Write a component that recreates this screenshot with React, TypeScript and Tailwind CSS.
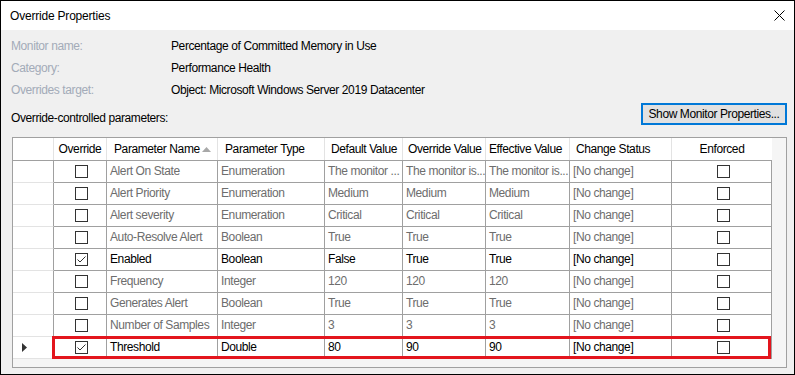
import React from "react";

type Row = {
  name: string;
  type: string;
  def: string;
  over: string;
  eff: string;
  checked: boolean;
  active: boolean;
  current?: boolean;
};

const rows: Row[] = [
  { name: "Alert On State", type: "Enumeration", def: "The monitor ...", over: "The monitor is...", eff: "The monitor is...", checked: false, active: false },
  { name: "Alert Priority", type: "Enumeration", def: "Medium", over: "Medium", eff: "Medium", checked: false, active: false },
  { name: "Alert severity", type: "Enumeration", def: "Critical", over: "Critical", eff: "Critical", checked: false, active: false },
  { name: "Auto-Resolve Alert", type: "Boolean", def: "True", over: "True", eff: "True", checked: false, active: false },
  { name: "Enabled", type: "Boolean", def: "False", over: "True", eff: "True", checked: true, active: true },
  { name: "Frequency", type: "Integer", def: "120", over: "120", eff: "120", checked: false, active: false },
  { name: "Generates Alert", type: "Boolean", def: "True", over: "True", eff: "True", checked: false, active: false },
  { name: "Number of Samples", type: "Integer", def: "3", over: "3", eff: "3", checked: false, active: false },
  { name: "Threshold", type: "Double", def: "80", over: "90", eff: "90", checked: true, active: true, current: true },
];

function Checkbox({ checked }: { checked: boolean }) {
  return (
    <div className="w-[13px] h-[13px] border border-[#333333] bg-white">
      {checked && (
        <svg width="11" height="11" viewBox="0 0 11 11">
          <polyline points="1.5,5.5 4,8 9.5,2.5" fill="none" stroke="#333333" strokeWidth="1" />
        </svg>
      )}
    </div>
  );
}

// cell widths include the right grid line
const W = {
  rh: "w-[41px]",
  ov: "w-[53px]",
  name: "w-[111px]",
  type: "w-[107px]",
  def: "w-[78px]",
  oval: "w-[83px]",
  eff: "w-[84px]",
  status: "w-[102px]",
  enf: "w-[100px]",
};

function Cell({ w, children, className = "" }: { w: string; children?: React.ReactNode; className?: string }) {
  return (
    <div
      className={`${w} shrink-0 h-full border-r border-[#a0a0a0] pl-[3px] overflow-hidden whitespace-nowrap leading-[21px] ${className}`}
    >
      {children}
    </div>
  );
}

function HeadCell({ w, children, className = "" }: { w: string; children?: React.ReactNode; className?: string }) {
  return (
    <div
      className={`${w} shrink-0 h-full border-r border-[#e3e3e3] overflow-hidden whitespace-nowrap leading-[22px] ${className}`}
    >
      {children}
    </div>
  );
}

export default function App() {
  return (
    <div
      className="w-[795px] h-[375px] border border-black bg-[#f0f0f0] text-[12px] text-black tracking-[-0.4px] overflow-hidden"
      style={{ fontFamily: '"Liberation Sans", Arial, sans-serif' }}
    >
      {/* title bar */}
      <div className="h-[29px] bg-white flex items-center justify-between pl-[9px] pr-[8px]">
        <span className="tracking-[-0.2px]">Override Properties</span>
        <svg width="11" height="11" viewBox="0 0 11 11" className="mr-[1px]">
          <path d="M0.5 0.5 L10.5 10.5 M10.5 0.5 L0.5 10.5" stroke="#000" strokeWidth="1" />
        </svg>
      </div>

      <div className="pt-[5px]">
        {/* info rows */}
        <div className="pl-[10px]">
          {[
            ["Monitor name:", "Percentage of Committed Memory in Use"],
            ["Category:", "Performance Health"],
            ["Overrides target:", "Object: Microsoft Windows Server 2019 Datacenter"],
          ].map(([k, v]) => (
            <div key={k} className="flex h-[22px] leading-[22px]">
              <span className="w-[160px] text-[#a3abb8]">{k}</span>
              <span>{v}</span>
            </div>
          ))}
        </div>

        <div className="flex justify-between pl-[10px] pr-[7px] mt-[2px]">
          <span className="pt-[8px] leading-[14px]">Override-controlled parameters:</span>
          <button className="w-[146px] h-[22px] border-2 border-[#0078d7] bg-[#e1e1e1] leading-[18px] text-center">
            Show Monitor Properties...
          </button>
        </div>

        {/* grid */}
        <div className="relative ml-[11px] mt-[12px] w-[775px] h-[231px] border border-[#a0a0a0] bg-[#f5f5f5]">
          {/* header */}
          <div className="flex h-[23px] bg-white border-b border-[#a0a0a0] w-[759px]">
            <HeadCell w={W.rh} className="border-[#a0a0a0]" />
            <HeadCell w={W.ov} className="text-center">Override</HeadCell>
            <HeadCell w={W.name} className="pl-[7px] flex items-center justify-between pr-[6px]">
              <span>Parameter Name</span>
              <svg width="9" height="5" viewBox="0 0 9 5">
                <polygon points="0,5 4.5,0 9,5" fill="#a8a8a8" />
              </svg>
            </HeadCell>
            <HeadCell w={W.type} className="pl-[7px]">Parameter Type</HeadCell>
            <HeadCell w={W.def} className="pl-[6px]">Default Value</HeadCell>
            <HeadCell w={W.oval} className="pl-[5px]">Override Value</HeadCell>
            <HeadCell w={W.eff} className="pl-[3px]">Effective Value</HeadCell>
            <HeadCell w={W.status} className="pl-[6px]">Change Status</HeadCell>
            <HeadCell w={W.enf} className="text-center border-r-0">Enforced</HeadCell>
          </div>

          {rows.map((r) => (
            <div
              key={r.name}
              className={`flex h-[22px] w-[759px] bg-white ${r.active ? "text-black" : "text-[#6d6d6d]"}`}
            >
              <div className={`${W.rh} shrink-0 h-full border-r border-[#a0a0a0] border-b border-b-[#e3e3e3] flex items-center pl-[9px]`}>
                {r.current && (
                  <svg width="5" height="9" viewBox="0 0 5 9">
                    <polygon points="0,0 5,4.5 0,9" fill="#333333" />
                  </svg>
                )}
              </div>
              <div className="flex h-full border-b border-[#a0a0a0]">
                <Cell w={W.ov} className="flex items-center justify-center pl-0">
                  <Checkbox checked={r.checked} />
                </Cell>
                <Cell w={W.name}>{r.name}</Cell>
                <Cell w={W.type}>{r.type}</Cell>
                <Cell w={W.def}>{r.def}</Cell>
                <Cell w={W.oval}>{r.over}</Cell>
                <Cell w={W.eff}>{r.eff}</Cell>
                <Cell w={W.status}>[No change]</Cell>
                <Cell w={W.enf} className="flex items-center justify-center pl-0">
                  <Checkbox checked={false} />
                </Cell>
              </div>
            </div>
          ))}

          {/* selected row highlight */}
          <div className="absolute left-[39px] top-[198px] w-[719px] h-[23px] border-[3px] border-[#e3151d] pointer-events-none" />
        </div>
      </div>
    </div>
  );
}
